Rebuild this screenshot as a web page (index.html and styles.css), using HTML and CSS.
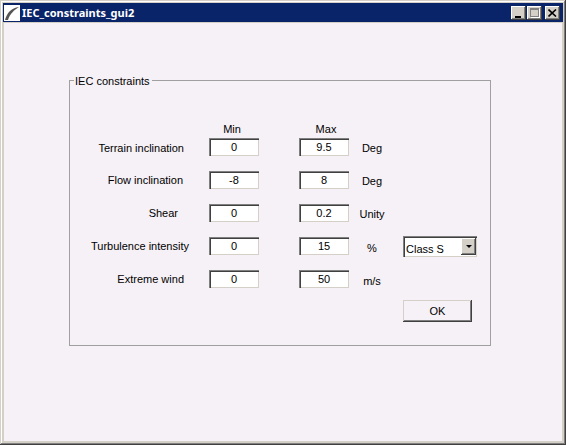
FILE: index.html
```html
<!DOCTYPE html>
<html lang="en">

<head>
    <meta charset="utf-8">
    <title>IEC_constraints_gui2</title>
    <link rel="stylesheet" href="styles.css">
</head>

<body>
    <div class="window">
        <div class="titlebar">
            <svg class="app-icon" width="16" height="16" viewBox="0 0 16 16">
                <rect width="16" height="16" fill="#fff" />
                <path d="M1 15C3 8 7 3 15 2C10 5 6 9 4 15Z" fill="#555" />
            </svg>
            <span class="title">IEC_constraints_gui2</span>
            <div class="win-btn win-min"><span class="min-glyph"></span></div>
            <div class="win-btn win-max"><span class="max-glyph"></span></div>
            <div class="win-btn win-close">
                <svg width="9" height="8" viewBox="0 0 9 8">
                    <path d="M0.5 0.5L8 7.5M8 0.5L0.5 7.5" stroke="#000" stroke-width="1.6" />
                </svg>
            </div>
        </div>

        <div class="content">
            <div class="panel">
                <div class="panel-title">IEC constraints</div>

                <div class="row row-head">
                    <div class="head head-min">Min</div>
                    <div class="head head-max">Max</div>
                </div>

                <div class="row">
                    <div class="row-label label-terrain">Terrain inclination</div>
                    <input class="field" value="0">
                    <input class="field field-max" value="9.5">
                    <div class="unit">Deg</div>
                </div>
                <div class="row">
                    <div class="row-label label-flow">Flow inclination</div>
                    <input class="field" value="-8">
                    <input class="field field-max" value="8">
                    <div class="unit">Deg</div>
                </div>
                <div class="row">
                    <div class="row-label label-shear">Shear</div>
                    <input class="field" value="0">
                    <input class="field field-max" value="0.2">
                    <div class="unit">Unity</div>
                </div>
                <div class="row">
                    <div class="row-label">Turbulence intensity</div>
                    <input class="field" value="0">
                    <input class="field field-max" value="15">
                    <div class="unit unit-low">%</div>
                    <div class="combo">
                        <span class="combo-text">Class S</span>
                        <span class="combo-btn"><span class="combo-arrow"></span></span>
                    </div>
                </div>
                <div class="row">
                    <div class="row-label label-wind">Extreme wind</div>
                    <input class="field" value="0">
                    <input class="field field-max" value="50">
                    <div class="unit unit-low">m/s</div>
                </div>

                <div class="actions">
                    <button class="ok-btn">OK</button>
                </div>
            </div>
        </div>
    </div>
</body>

</html>
```

FILE: styles.css
```css
:root {
    --color-face: #d4d0c8;
    --color-shadow: #808080;
    --color-dark: #404040;
    --color-form: #f6f1f6;
    --color-title: #0a246a;
}

html,
body {
    margin: 0;
    padding: 0;
}

body {
    font-family: "Liberation Sans", Arial, sans-serif;
    font-size: 11px;
    color: #000;
}

.window {
    box-sizing: border-box;
    width: 566px;
    height: 445px;
    padding: 3px;
    display: flex;
    flex-direction: column;
    background: var(--color-face);
    box-shadow: inset -1px -1px var(--color-dark), inset 1px 1px var(--color-face),
        inset -2px -2px var(--color-shadow), inset 2px 2px #fff;
}

.titlebar {
    height: 19px;
    flex: none;
    display: flex;
    align-items: center;
    padding-left: 1px;
    background: var(--color-title);
}

.app-icon {
    flex: none;
}

.title {
    flex: 1;
    margin-left: 2px;
    font-family: "Noto Sans", sans-serif;
    font-size: 11px;
    font-weight: 700;
    color: #fff;
}

.win-btn {
    box-sizing: border-box;
    width: 15px;
    height: 14px;
    display: flex;
    align-items: center;
    justify-content: center;
    background: var(--color-face);
    box-shadow: inset -1px -1px var(--color-dark), inset 1px 1px #fff,
        inset -2px -2px var(--color-shadow);
}

.win-min {
    margin-right: 1px;
    align-items: flex-end;
    justify-content: flex-start;
    padding: 0 0 2px 4px;
}

.min-glyph {
    width: 6px;
    height: 2px;
    background: #000;
}

.win-max {
    margin-right: 3px;
}

.max-glyph {
    box-sizing: border-box;
    width: 9px;
    height: 9px;
    border: 1px solid var(--color-shadow);
    border-top-width: 2px;
    box-shadow: 1px 1px #fff;
}

.win-close {
    margin-right: 3px;
}

.content {
    flex: 1;
    margin: 1px;
    padding: 57px 0 0 65px;
    background: var(--color-form);
}

.panel {
    position: relative;
    box-sizing: border-box;
    width: 422px;
    height: 266px;
    padding-top: 41px;
    border: 1px solid #a0a0a0;
}

.panel-title {
    position: absolute;
    left: 4px;
    top: -6px;
    padding: 0 2px 0 1px;
    line-height: 13px;
    background: var(--color-form);
}

.row {
    display: flex;
    align-items: center;
    height: 18px;
    margin-bottom: 15px;
}

.row-head {
    box-sizing: border-box;
    height: 16px;
    padding-bottom: 2px;
    margin-bottom: 0;
}

.head {
    width: 50px;
    text-align: center;
}

.head-min {
    margin-left: 137px;
}

.head-max {
    margin-left: 44px;
}

.row-label {
    box-sizing: border-box;
    flex: none;
    width: 119px;
    margin-right: 20px;
    text-align: right;
}

.label-terrain,
.label-wind {
    padding-right: 5px;
}

.label-terrain {
    padding-top: 2px;
}

.label-flow {
    padding-right: 6px;
}

.label-shear {
    padding-right: 11px;
}

.field {
    box-sizing: border-box;
    flex: none;
    width: 50px;
    height: 18px;
    padding: 0;
    border: 0;
    outline: none;
    text-align: center;
    font: 11px "Liberation Sans", Arial, sans-serif;
    color: #000;
    background: #fff;
    box-shadow: inset 1px 1px var(--color-shadow), inset 2px 2px var(--color-dark),
        inset -1px -1px var(--color-face);
}

.field-max {
    margin-left: 40px;
}

.unit {
    box-sizing: border-box;
    flex: none;
    width: 34px;
    margin-left: 6px;
    padding-top: 2px;
    text-align: center;
}

.unit-low {
    padding-top: 4px;
}

.combo {
    box-sizing: border-box;
    flex: none;
    width: 74px;
    height: 21px;
    margin-left: 14px;
    padding: 2px 1px 1px 3px;
    display: flex;
    align-items: center;
    justify-content: space-between;
    background: #fff;
    box-shadow: inset 1px 1px var(--color-shadow), inset 2px 2px var(--color-dark),
        inset -1px -1px var(--color-face);
}

.combo-text {
    padding-top: 4px;
}

.combo-btn {
    box-sizing: border-box;
    width: 15px;
    height: 17px;
    display: flex;
    align-items: center;
    justify-content: center;
    background: var(--color-face);
    box-shadow: inset -1px -1px var(--color-dark), inset 1px 1px #fff,
        inset -2px -2px var(--color-shadow);
}

.combo-arrow {
    width: 0;
    height: 0;
    border-left: 3px solid transparent;
    border-right: 3px solid transparent;
    border-top: 3px solid #000;
}

.actions {
    margin-top: -3px;
    padding-left: 333px;
}

.ok-btn {
    box-sizing: border-box;
    display: block;
    width: 69px;
    height: 22px;
    padding: 0;
    border: 0;
    font: 11px "Liberation Sans", Arial, sans-serif;
    color: #000;
    background: var(--color-form);
    box-shadow: inset -1px -1px var(--color-dark), inset 1px 1px var(--color-face),
        inset -2px -2px var(--color-shadow);
}
```
